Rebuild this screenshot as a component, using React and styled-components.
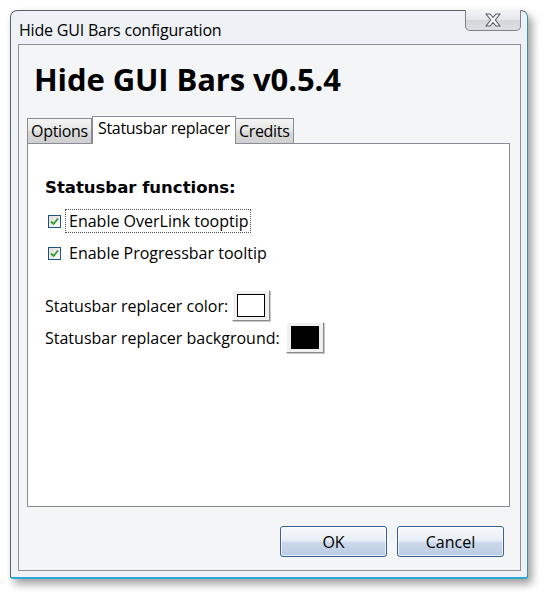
import React, { useState } from "react";
import styled, { createGlobalStyle } from "styled-components";

const GlobalStyle = createGlobalStyle`
  html, body {
    margin: 0;
    background: #fff;
  }
  body {
    font-family: "Open Sans", "Noto Sans", sans-serif;
  }
`;

const Page = styled.div`
  padding: 10px 0 0 10px;
  width: 547px;
  height: 598px;
  box-sizing: border-box;
`;

const Window = styled.div`
  width: 518px;
  height: 569px;
  box-sizing: border-box;
  background: #eef2f6;
  border: 1px solid #5d6168;
  border-right-color: #3d8fae;
  border-bottom: 2px solid #2aa9d4;
  border-radius: 7px 7px 3px 3px;
  box-shadow: 4px 5px 9px rgba(0, 0, 0, 0.38);
  display: flex;
  flex-direction: column;
  padding: 0 6px 6px 7px;
`;

const TitleBar = styled.div`
  height: 33px;
  display: flex;
  justify-content: space-between;
  align-items: flex-start;
`;

const Title = styled.div`
  font-size: 16px;
  color: #000;
  margin: 8px 0 0 1px;
  letter-spacing: -0.2px;
`;

const CloseButton = styled.div`
  width: 54px;
  height: 20px;
  border: 1px solid #7d8289;
  border-top: none;
  border-radius: 0 0 5px 5px;
  background: linear-gradient(#f3f4f6 0%, #e4e6e9 50%, #d3d6da 51%, #dcdfe3 100%);
  display: flex;
  align-items: center;
  justify-content: center;
  margin-top: -1px;
`;

const Client = styled.div`
  flex: 1;
  border: 1px solid #8d9094;
  background: #f4f5f7;
  display: flex;
  flex-direction: column;
  padding: 0 10px 0 8px;
`;

const Heading = styled.h1`
  font-family: "Open Sans", "Noto Sans", sans-serif;
  font-weight: 700;
  font-size: 31px;
  margin: 15px 0 0 7px;
  line-height: 38px;
  letter-spacing: -0.1px;
  color: #000;
`;

const TabRow = styled.div`
  display: flex;
  align-items: flex-end;
  margin-top: 18px;
  height: 28px;
`;

const Tab = styled.div`
  box-sizing: border-box;
  height: ${(p) => (p.$active ? "28px" : "26px")};
  padding: 0 ${(p) => (p.$active ? "5px" : "3px")};
  font-size: 16px;
  letter-spacing: -0.3px;
  line-height: ${(p) => (p.$active ? "22px" : "25px")};
  border: 1px solid #898c95;
  border-bottom: ${(p) => (p.$active ? "none" : "1px solid #898c95")};
  margin-left: ${(p) => (p.$active ? "0" : "-1px")};
  background: ${(p) =>
    p.$active ? "#fff" : "linear-gradient(#f4f4f4, #e6e6e6 50%, #dcdcdc 51%, #cfcfcf)"};
  color: #000;
  position: relative;
  z-index: ${(p) => (p.$active ? 2 : 1)};
  &:first-child {
    margin-left: 0;
  }
`;

const Panel = styled.div`
  box-sizing: border-box;
  height: 364px;
  margin-top: -1px;
  background: #fff;
  border: 1px solid #898c95;
  padding: 33px 0 0 17px;
  display: flex;
  flex-direction: column;
`;

const SectionTitle = styled.div`
  font-family: "DejaVu Sans", sans-serif;
  font-weight: 700;
  font-size: 16.5px;
  line-height: 22px;
  margin-bottom: 10px;
`;

const CheckRow = styled.label`
  display: flex;
  align-items: center;
  height: 24px;
  margin-left: 3px;
  margin-bottom: 8px;
`;

const Box = styled.span`
  width: 13px;
  height: 13px;
  box-sizing: border-box;
  border: 1px solid #1c5180;
  background: linear-gradient(135deg, #dcdcdc, #fff);
  display: inline-flex;
  align-items: center;
  justify-content: center;
  margin-right: 4px;
`;

const CheckText = styled.span`
  font-size: 16px;
  padding: 0 1px 0 3px;
  line-height: 22px;
  border: 1px dotted ${(p) => (p.$focus ? "#555" : "transparent")};
`;

const ColorRow = styled.div`
  display: flex;
  align-items: center;
  font-size: 16px;
  margin-top: ${(p) => p.$top || 0}px;
  height: 31px;
  gap: ${(p) => p.$gap || 4}px;
`;

const Swatch = styled.div`
  width: 38px;
  height: 31px;
  box-sizing: border-box;
  background: #f0f0f0;
  border: 1px solid;
  border-color: #fff #8a8a8a #8a8a8a #fff;
  box-shadow: 1px 1px 0 #c8c8c8;
  display: flex;
  align-items: center;
  justify-content: center;
  &::after {
    content: "";
    width: 28px;
    height: 23px;
    box-sizing: border-box;
    border: 1px solid #000;
    background: ${(p) => p.$color};
  }
`;

const Footer = styled.div`
  display: flex;
  justify-content: flex-end;
  gap: 10px;
  padding: 19px 6px 0 0;
`;

const Button = styled.button`
  width: 107px;
  height: 31px;
  border: 1px solid #3b5e8c;
  border-radius: 3px;
  background: linear-gradient(#f7f9fc 0%, #e8eef6 45%, #cbd8ea 55%, #b9cbe3 100%);
  font-family: "Open Sans", "Noto Sans", sans-serif;
  font-size: 16px;
  color: #000;
  padding: 0;
  box-shadow: inset 0 0 0 1px rgba(255, 255, 255, 0.7);
`;

const Check = () => (
  <svg width="9" height="9" viewBox="0 0 9 9">
    <path d="M1 4.5 L3.5 7 L8 1.5" fill="none" stroke="#2e9a2e" strokeWidth="1.8" />
  </svg>
);

const CloseX = () => (
  <svg width="18" height="14" viewBox="0 0 18 14">
    <path
      d="M2 1 H6 L9 4.5 L12 1 H16 L11.3 7 L16 13 H12 L9 9.5 L6 13 H2 L6.7 7 Z"
      fill="#f4f5f7"
      stroke="#55595f"
      strokeWidth="1.1"
      strokeLinejoin="round"
    />
  </svg>
);

const App = () => {
  const [tab, setTab] = useState(1);
  const tabs = ["Options", "Statusbar replacer", "Credits"];
  return (
    <Page>
      <GlobalStyle />
      <Window>
        <TitleBar>
          <Title>Hide GUI Bars configuration</Title>
          <CloseButton>
            <CloseX />
          </CloseButton>
        </TitleBar>
        <Client>
          <Heading>Hide GUI Bars v0.5.4</Heading>
          <TabRow>
            {tabs.map((t, i) => (
              <Tab key={t} $active={tab === i} onClick={() => setTab(i)}>
                {t}
              </Tab>
            ))}
          </TabRow>
          <Panel>
            <SectionTitle>Statusbar functions:</SectionTitle>
            <CheckRow>
              <Box>
                <Check />
              </Box>
              <CheckText $focus>Enable OverLink tooptip</CheckText>
            </CheckRow>
            <CheckRow>
              <Box>
                <Check />
              </Box>
              <CheckText>Enable Progressbar tooltip</CheckText>
            </CheckRow>
            <ColorRow $top={17}>
              Statusbar replacer color:
              <Swatch $color="#fff" />
            </ColorRow>
            <ColorRow $top={1} $gap={6}>
              Statusbar replacer background:
              <Swatch $color="#000" />
            </ColorRow>
          </Panel>
          <Footer>
            <Button>OK</Button>
            <Button>Cancel</Button>
          </Footer>
        </Client>
      </Window>
    </Page>
  );
};

export default App;
